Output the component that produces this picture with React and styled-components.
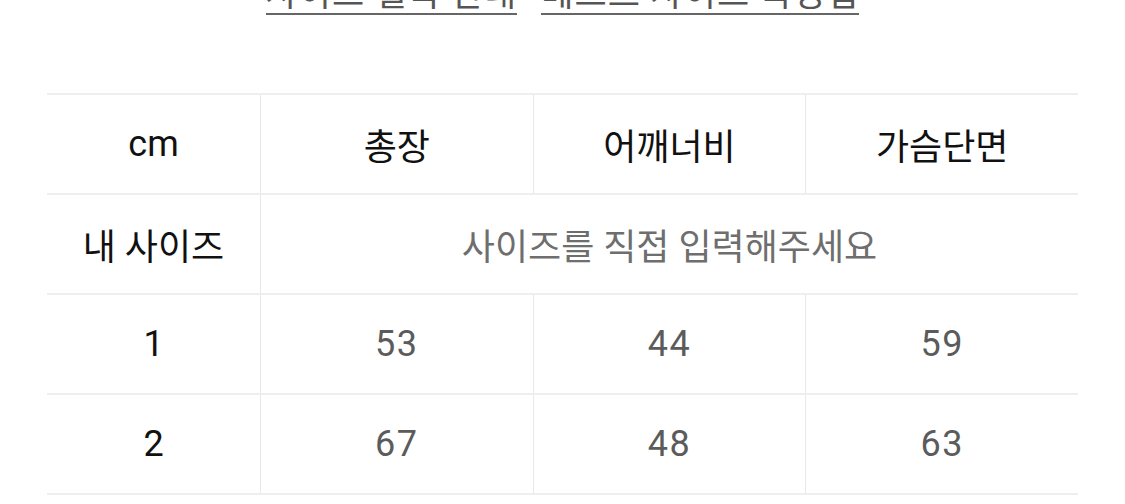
import React from "react";
import styled, { createGlobalStyle } from "styled-components";

const Global = createGlobalStyle`
  html, body { margin: 0; padding: 0; background: #fff; }
  body { font-family: Roboto, "Noto Sans CJK KR", sans-serif; overflow: hidden; }
`;

const Page = styled.div`
  width: 1125px;
  height: 504px;
  padding: 0 47px;
  box-sizing: border-box;
  overflow: hidden;
`;

const Links = styled.div`
  display: flex;
  justify-content: center;
  gap: 24px;
  margin-top: -22px;
`;

const GuideLink = styled.a`
  font-size: 35px;
  line-height: 34px;
  color: #555;
  text-decoration: none;
  padding-bottom: 1px;
  border-bottom: 2px solid #666;
  letter-spacing: 1px;
`;

const Table = styled.div`
  margin-top: 78px;
  border-bottom: 2px solid #eeeeee;
`;

const Row = styled.div`
  display: grid;
  grid-template-columns: 213px repeat(3, 1fr);
  height: 100px;
  border-top: 2px solid #eeeeee;
  box-sizing: border-box;
`;

const Cell = styled.div`
  display: flex;
  align-items: center;
  justify-content: center;
  font-size: 36px;
  color: ${(p) => (p.$muted ? "#5b5b5b" : "#111")};
  letter-spacing: ${(p) => (p.$muted ? "1.5px" : "0")};
  border-left: ${(p) => (p.$first ? "none" : "1px solid #e8e8e8")};
  grid-column: ${(p) => (p.$span ? `span ${p.$span}` : "auto")};
`;

const Placeholder = styled.span`
  color: #6e6e6e;
  font-size: 36px;
`;

const head = ["총장", "어깨너비", "가슴단면"];
const rows = [
  ["1", "53", "44", "59"],
  ["2", "67", "48", "63"],
];

export default function App() {
  return (
    <Page>
      <Global />
      <Links>
        <GuideLink href="#">사이즈 실측 안내</GuideLink>
        <GuideLink href="#">베스트 사이즈 측정법</GuideLink>
      </Links>
      <Table>
        <Row>
          <Cell $first>cm</Cell>
          {head.map((h) => (
            <Cell key={h}>{h}</Cell>
          ))}
        </Row>
        <Row>
          <Cell $first>내 사이즈</Cell>
          <Cell $span={3}>
            <Placeholder>사이즈를 직접 입력해주세요</Placeholder>
          </Cell>
        </Row>
        {rows.map((r) => (
          <Row key={r[0]}>
            <Cell $first>{r[0]}</Cell>
            {r.slice(1).map((v, i) => (
              <Cell key={i} $muted>
                {v}
              </Cell>
            ))}
          </Row>
        ))}
      </Table>
    </Page>
  );
}
